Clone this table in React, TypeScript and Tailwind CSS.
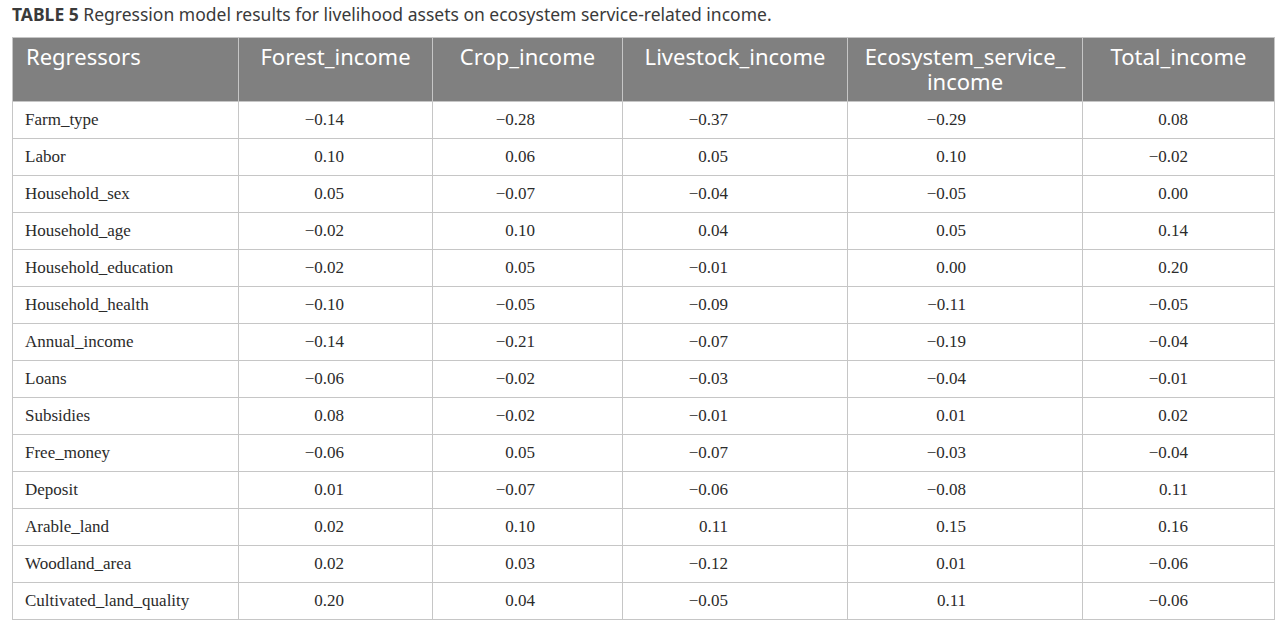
const columns = [
  { label: "Regressors", width: "w-[226px]" },
  { label: "Forest_income", width: "w-[194px]" },
  { label: "Crop_income", width: "w-[190px]" },
  { label: "Livestock_income", width: "w-[225px]" },
  { label: "Ecosystem_service_ income", width: "w-[235px]" },
  { label: "Total_income", width: "w-[192px]" },
];

// right padding per numeric column so the values line up like the source
const numPad = ["pr-[88px]", "pr-[87px]", "pr-[119px]", "pr-[116px]", "pr-[86px]"];

const rows: [string, string[]][] = [
  ["Farm_type", ["−0.14", "−0.28", "−0.37", "−0.29", "0.08"]],
  ["Labor", ["0.10", "0.06", "0.05", "0.10", "−0.02"]],
  ["Household_sex", ["0.05", "−0.07", "−0.04", "−0.05", "0.00"]],
  ["Household_age", ["−0.02", "0.10", "0.04", "0.05", "0.14"]],
  ["Household_education", ["−0.02", "0.05", "−0.01", "0.00", "0.20"]],
  ["Household_health", ["−0.10", "−0.05", "−0.09", "−0.11", "−0.05"]],
  ["Annual_income", ["−0.14", "−0.21", "−0.07", "−0.19", "−0.04"]],
  ["Loans", ["−0.06", "−0.02", "−0.03", "−0.04", "−0.01"]],
  ["Subsidies", ["0.08", "−0.02", "−0.01", "0.01", "0.02"]],
  ["Free_money", ["−0.06", "0.05", "−0.07", "−0.03", "−0.04"]],
  ["Deposit", ["0.01", "−0.07", "−0.06", "−0.08", "0.11"]],
  ["Arable_land", ["0.02", "0.10", "0.11", "0.15", "0.16"]],
  ["Woodland_area", ["0.02", "0.03", "−0.12", "0.01", "−0.06"]],
  ["Cultivated_land_quality", ["0.20", "0.04", "−0.05", "0.11", "−0.06"]],
];

export default function App() {
  return (
    <div className="h-[620px] w-[1280px] overflow-hidden bg-white pl-3 pt-[2px]">
      <p className="font-['Noto_Sans',sans-serif] text-[17.5px] leading-[24px] text-[#3a3a3a]">
        <span className="font-bold">TABLE 5</span> Regression model results for livelihood assets on
        ecosystem service-related income.
      </p>
      <table className="mt-[11px] table-fixed border-collapse">
        <thead>
          <tr className="h-[64px] bg-[#808080]">
            {columns.map((col, i) => (
              <th
                key={col.label}
                className={`${col.width} border border-[#c6c6c6] px-[13px] pb-[7px] pt-[6px] align-top font-['Noto_Sans',sans-serif] text-[22px] font-normal leading-[25px] text-white ${
                  i === 0 ? "text-left" : "text-center"
                }`}
              >
                {col.label}
              </th>
            ))}
          </tr>
        </thead>
        <tbody>
          {rows.map(([name, values]) => (
            <tr key={name} className="h-[37px]">
              <td className="border border-[#c6c6c6] px-[12px] font-['Liberation_Serif',serif] text-[17px] leading-[20px] text-[#2b2b2b]">
                {name}
              </td>
              {values.map((v, i) => (
                <td
                  key={i}
                  className={`border border-[#c6c6c6] text-right font-['Liberation_Serif',serif] text-[17px] leading-[20px] text-[#2b2b2b] ${numPad[i]}`}
                >
                  {v}
                </td>
              ))}
            </tr>
          ))}
        </tbody>
      </table>
    </div>
  );
}
